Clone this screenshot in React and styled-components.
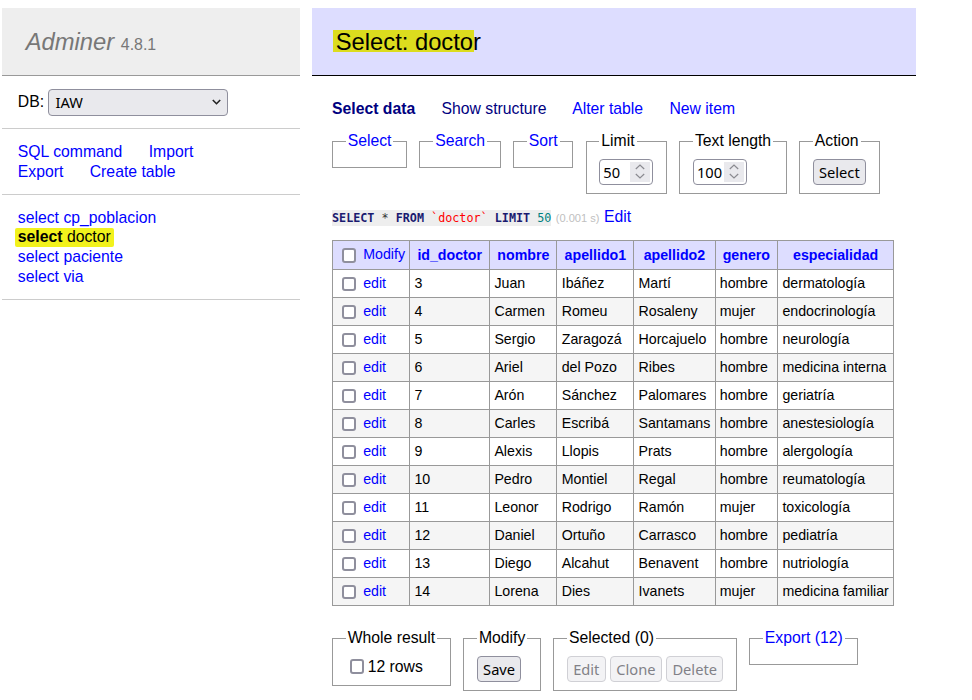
import React from "react";
import styled, { createGlobalStyle } from "styled-components";

const GlobalStyle = createGlobalStyle`
  html, body { margin: 0; padding: 0; background: #fff; overflow: hidden; }
  body {
    font-family: "Liberation Sans", Arial, Helvetica, sans-serif;
    font-size: 15.75px;
    line-height: 1.25;
    color: #000;
  }
`;

const Page = styled.div`
  display: flex;
  align-items: flex-start;
  padding-top: 8px;
`;

/* ---------- sidebar ---------- */
const Sidebar = styled.aside`
  flex: none;
  width: 298px;
  margin-left: 2px;
`;

const Brand = styled.h1`
  margin: 0;
  padding: 18.6px 23.76px;
  font-size: 23.76px;
  line-height: 1.25;
  font-weight: normal;
  color: #777;
  background: #eee;
  border-bottom: 1px solid #999;
  white-space: nowrap;
`;

const BrandLink = styled.a`
  color: #777;
  font-style: italic;
  text-decoration: none;
`;

const Version = styled.span`
  font-size: 67%;
  color: #777;
`;

const MenuBlock = styled.div`
  padding: 12.7px 15.84px;
  border-bottom: 1px solid #ccc;
`;

const DbLine = styled.div`
  display: flex;
  align-items: center;
  gap: 4.4px;
  height: 27px;
`;

const SelectBox = styled.div`
  width: 180px;
  height: 27px;
  box-sizing: border-box;
  display: flex;
  align-items: center;
  justify-content: space-between;
  padding: 0 6.5px 0 6px;
  background: #e9e9ed;
  border: 1px solid #8f8f9d;
  border-radius: 4px;
  font-family: "Noto Sans", "DejaVu Sans", sans-serif;
  font-size: 14.67px;
  color: #000;
`;

const Link = styled.a`
  color: ${(p) => (p.$visited ? "navy" : "blue")};
  font-weight: ${(p) => (p.$active ? "bold" : "normal")};
  text-decoration: none;
  cursor: pointer;
`;

const SpacedLink = styled(Link)`
  margin-right: 22px;
  white-space: nowrap;
`;

const TableList = styled.ul`
  margin: 0;
  padding: 12.7px 15.84px;
  list-style: none;
  border-bottom: 1px solid #ccc;
  white-space: nowrap;
`;

const Marker = styled.span`
  background: ${(p) => p.$tone || "#f2f21c"};
  padding: 0 3px 2px;
  margin: 0 -3px;
  border-radius: 2px;
  color: #000;
`;

const MarkedLink = styled.a`
  color: #000;
  text-decoration: none;
  font-weight: ${(p) => (p.$active ? "bold" : "normal")};
`;

/* ---------- main ---------- */
const Main = styled.main`
  flex: none;
  margin-left: 12px;
`;

const Title = styled.h2`
  margin: 0;
  padding: 18.6px 23.76px;
  font-size: 23.76px;
  line-height: 1.25;
  font-weight: normal;
  color: #000;
  background: #ddf;
  border-bottom: 1px solid #000;
`;

const TitleMark = styled.span`
  background: linear-gradient(
    to bottom,
    transparent 9%,
    #dcdc1e 9%,
    #dcdc1e 88%,
    transparent 88%
  );
  padding: 0 1px 0 3px;
  margin: 0 -1px 0 -3px;
`;

const Content = styled.div`
  padding: 23px 22px 0 20px;
`;

const TabNav = styled.p`
  margin: 0;
  white-space: nowrap;
`;

const FieldRow = styled.div`
  display: flex;
  align-items: flex-start;
  gap: 12.3px;
  margin-top: ${(p) => p.$top || "12.7px"};
`;

const Fieldset = styled.fieldset`
  margin: 0;
  padding: 7.9px 12.7px;
  border: 1px solid #999;
`;

const Legend = styled.legend`
  padding: 0 2px;
  line-height: 19.8px;
  white-space: nowrap;
`;

const Controls = styled.div`
  display: flex;
  align-items: center;
  gap: 4.5px;
`;

const NumberBox = styled.div`
  display: flex;
  align-items: center;
  width: 54px;
  height: 26.4px;
  box-sizing: border-box;
  padding: 0 2px 0 3px;
  border: 1px solid #8f8f9d;
  border-radius: 4px;
  background: #fff;
  font-family: "Noto Sans", "DejaVu Sans", sans-serif;
  font-size: 14.67px;
`;

const NumberValue = styled.span`
  flex: 1;
`;

const Spinner = styled.span`
  display: flex;
  width: 20px;
  height: 19.5px;
  background: #e9e9ed;
`;

const Button = styled.button`
  height: 26.4px;
  box-sizing: border-box;
  padding: 0 5.2px;
  font-family: "Noto Sans", "DejaVu Sans", sans-serif;
  font-size: 14.67px;
  line-height: 20px;
  color: ${(p) => (p.disabled ? "#818187" : "#000")};
  background: ${(p) => (p.disabled ? "#f3f3f5" : "#e9e9ed")};
  border: 1px solid ${(p) => (p.disabled ? "#d0d0d5" : "#8f8f9d")};
  border-radius: 4px;
`;

const Check = styled.input.attrs({ type: "checkbox" })`
  appearance: none;
  -webkit-appearance: none;
  box-sizing: border-box;
  width: 14.3px;
  height: 14.3px;
  margin: ${(p) => (p.$tight ? "2px 3.3px 2px 4.4px" : "3.3px 3.3px 3.3px 4.4px")};
  border: 2px solid #8f8f9d;
  border-radius: 3px;
  background: #fff;
  vertical-align: middle;
`;

const CheckLabel = styled.label`
  display: flex;
  align-items: center;
  white-space: nowrap;
`;

const SqlLine = styled.p`
  margin: 12.7px 0 0;
  white-space: nowrap;
`;

const Code = styled.code`
  font-family: "DejaVu Sans Mono", "Liberation Mono", monospace;
  font-size: 11.75px;
  background: #eee;
  padding: 1.4px 0;
`;

const Kw = styled.span`
  color: #1a1a70;
  font-weight: bold;
`;

const Tok = styled.span`
  color: ${(p) => p.$color};
`;

const Time = styled.span`
  color: silver;
  font-size: 11.1px;
`;

const DataTable = styled.table`
  margin-top: 13.8px;
  border-collapse: collapse;
  font-size: 14.2px;
  line-height: 1.25;

  td,
  th {
    border: 1px solid #999;
    padding: 2.85px 4.25px;
    white-space: nowrap;
    text-align: left;
  }
  thead tr {
    height: 29px;
  }
  thead td,
  thead th {
    background: #ddf;
  }
  thead th {
    text-align: center;
    padding: 2.85px 7.15px;
  }
  tbody tr {
    height: 28px;
  }
  tbody tr:nth-child(2n) {
    background: #f5f5f5;
  }
`;

const HeadLink = styled.a`
  color: blue;
  text-decoration: none;
  font-weight: bold;
`;

const rows = [
  ["3", "Juan", "Ibáñez", "Martí", "hombre", "dermatología"],
  ["4", "Carmen", "Romeu", "Rosaleny", "mujer", "endocrinología"],
  ["5", "Sergio", "Zaragozá", "Horcajuelo", "hombre", "neurología"],
  ["6", "Ariel", "del Pozo", "Ribes", "hombre", "medicina interna"],
  ["7", "Arón", "Sánchez", "Palomares", "hombre", "geriatría"],
  ["8", "Carles", "Escribá", "Santamans", "hombre", "anestesiología"],
  ["9", "Alexis", "Llopis", "Prats", "hombre", "alergología"],
  ["10", "Pedro", "Montiel", "Regal", "hombre", "reumatología"],
  ["11", "Leonor", "Rodrigo", "Ramón", "mujer", "toxicología"],
  ["12", "Daniel", "Ortuño", "Carrasco", "hombre", "pediatría"],
  ["13", "Diego", "Alcahut", "Benavent", "hombre", "nutriología"],
  ["14", "Lorena", "Dies", "Ivanets", "mujer", "medicina familiar"],
];

const columns = ["id_doctor", "nombre", "apellido1", "apellido2", "genero", "especialidad"];

const Chevron = () => (
  <svg width="9" height="6" viewBox="0 0 9 6">
    <polyline points="0.8,1 4.5,4.7 8.2,1" fill="none" stroke="#222" strokeWidth="1.6" />
  </svg>
);

const SpinIcon = () => (
  <svg width="20" height="19.5" viewBox="0 0 20 19.5">
    <polyline points="5.8,7 10,3 14.2,7" fill="none" stroke="#8a8a90" strokeWidth="1.2" />
    <polyline points="5.8,12 10,16 14.2,12" fill="none" stroke="#8a8a90" strokeWidth="1.2" />
  </svg>
);

const NumberInput = ({ value }) => (
  <NumberBox>
    <NumberValue>{value}</NumberValue>
    <Spinner>
      <SpinIcon />
    </Spinner>
  </NumberBox>
);

export default function App() {
  return (
    <>
      <GlobalStyle />
      <Page>
        <Sidebar>
          <Brand>
            <BrandLink href="#">Adminer</BrandLink> <Version>4.8.1</Version>
          </Brand>
          <MenuBlock>
            <DbLine>
              <span>DB:</span>
              <SelectBox>
                <span>IAW</span>
                <Chevron />
              </SelectBox>
            </DbLine>
          </MenuBlock>
          <MenuBlock>
            <SpacedLink href="#">SQL command</SpacedLink>{" "}
            <SpacedLink href="#">Import</SpacedLink>{" "}
            <SpacedLink href="#">Export</SpacedLink>{" "}
            <SpacedLink href="#">Create table</SpacedLink>
          </MenuBlock>
          <TableList>
            <li>
              <Link href="#">select</Link> <Link href="#">cp_poblacion</Link>
            </li>
            <li>
              <Marker>
                <MarkedLink href="#" $active>select</MarkedLink>{" "}
                <MarkedLink href="#">doctor</MarkedLink>
              </Marker>
            </li>
            <li>
              <Link href="#">select</Link> <Link href="#">paciente</Link>
            </li>
            <li>
              <Link href="#">select</Link> <Link href="#">via</Link>
            </li>
          </TableList>
        </Sidebar>

        <Main>
          <Title>
            <TitleMark>Select: docto</TitleMark>r
          </Title>
          <Content>
            <TabNav>
              <SpacedLink href="#" $visited $active>Select data</SpacedLink>{" "}
              <SpacedLink href="#" $visited>Show structure</SpacedLink>{" "}
              <SpacedLink href="#">Alter table</SpacedLink>{" "}
              <SpacedLink href="#">New item</SpacedLink>
            </TabNav>

            <FieldRow>
              <Fieldset>
                <Legend><Link href="#">Select</Link></Legend>
              </Fieldset>
              <Fieldset>
                <Legend><Link href="#">Search</Link></Legend>
              </Fieldset>
              <Fieldset>
                <Legend><Link href="#">Sort</Link></Legend>
              </Fieldset>
              <Fieldset>
                <Legend>Limit</Legend>
                <Controls><NumberInput value="50" /></Controls>
              </Fieldset>
              <Fieldset>
                <Legend>Text length</Legend>
                <Controls><NumberInput value="100" /></Controls>
              </Fieldset>
              <Fieldset>
                <Legend>Action</Legend>
                <Controls><Button>Select</Button></Controls>
              </Fieldset>
            </FieldRow>

            <SqlLine>
              <Code>
                <Kw>SELECT</Kw> <Tok $color="#333">*</Tok> <Kw>FROM</Kw>{" "}
                <Tok $color="red">`doctor`</Tok> <Kw>LIMIT</Kw>{" "}
                <Tok $color="#008080">50</Tok>
              </Code>{" "}
              <Time>(0.001 s)</Time> <Link href="#">Edit</Link>
            </SqlLine>

            <DataTable>
              <thead>
                <tr>
                  <td>
                    <Check $tight />{" "}
                    <Link href="#">Modify</Link>
                  </td>
                  {columns.map((c) => (
                    <th key={c}>
                      <HeadLink href="#">{c}</HeadLink>
                    </th>
                  ))}
                </tr>
              </thead>
              <tbody>
                {rows.map((r) => (
                  <tr key={r[0]}>
                    <td>
                      <Check $tight />{" "}
                      <Link href="#">edit</Link>
                    </td>
                    {r.map((v, i) => (
                      <td key={i}>{v}</td>
                    ))}
                  </tr>
                ))}
              </tbody>
            </DataTable>

            <FieldRow $top="22px">
              <Fieldset>
                <Legend>Whole result</Legend>
                <CheckLabel>
                  <Check />12 rows
                </CheckLabel>
              </Fieldset>
              <Fieldset>
                <Legend>Modify</Legend>
                <Controls><Button>Save</Button></Controls>
              </Fieldset>
              <Fieldset>
                <Legend>Selected (0)</Legend>
                <Controls>
                  <Button disabled>Edit</Button>
                  <Button disabled>Clone</Button>
                  <Button disabled>Delete</Button>
                </Controls>
              </Fieldset>
              <Fieldset>
                <Legend><Link href="#">Export (12)</Link></Legend>
              </Fieldset>
            </FieldRow>
          </Content>
        </Main>
      </Page>
    </>
  );
}
